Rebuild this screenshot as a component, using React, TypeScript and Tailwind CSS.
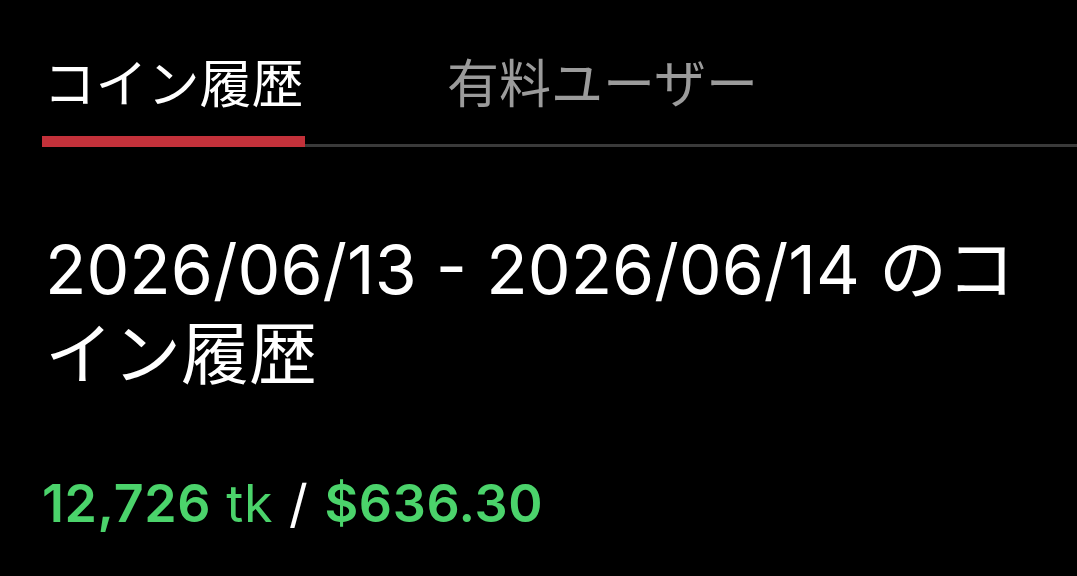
import React from "react";

const JP = "font-['Noto_Sans_CJK_JP','Noto_Sans',sans-serif]";
const LATIN = "font-['Inter','Noto_Sans_CJK_JP',sans-serif]";

export default function App() {
  return (
    <div className={`h-[576px] w-full overflow-hidden bg-black text-white ${JP}`}>
      {/* tabs */}
      <div className="relative pt-[46px]">
        <div className="flex items-end pl-[42px]">
          <div className="flex w-[263px] flex-col items-center">
            <span className="text-[52px] leading-[70px] text-white">コイン履歴</span>
            <div className="mt-[20px] h-[11px] w-full bg-[#c3313a]" />
          </div>
          <div className="ml-[142px] pb-[31px]">
            <span className="text-[52px] leading-[70px] text-[#9b9b9b]">有料ユーザー</span>
          </div>
        </div>
        <div className="absolute bottom-0 left-[305px] right-0 h-[3px] bg-[#3a3a3a]" />
      </div>

      {/* heading */}
      <h1 className={`mt-[80px] pl-[45px] pr-[20px] ${LATIN} text-[68px] font-normal leading-[85px]`}>
        2026/06/13 - 2026/06/14 のコイン履歴
      </h1>

      {/* totals */}
      <div className={`mt-[77px] flex items-baseline gap-[16px] pl-[42px] ${LATIN} text-[52px] leading-[60px] tracking-[0.6px]`}>
        <span className="text-[#4bd36b]">
          <span className="font-semibold">12,726</span> <span className="font-normal">tk</span>
        </span>
        <span className="text-white">/</span>
        <span className="font-semibold text-[#4bd36b]">$636.30</span>
      </div>
    </div>
  );
}
